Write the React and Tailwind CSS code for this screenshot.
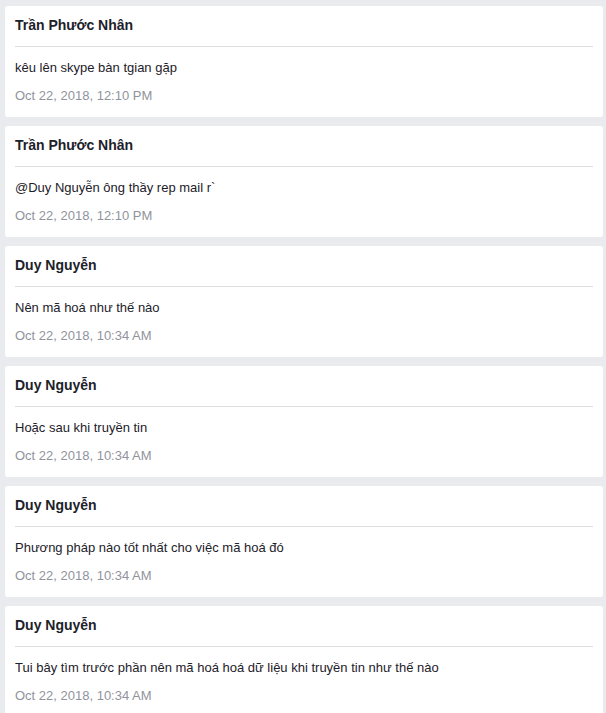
import React from 'react';

const comments = [
    { name: 'Trần Phước Nhân', text: 'kêu lên skype bàn tgian gặp', date: 'Oct 22, 2018, 12:10 PM' },
    { name: 'Trần Phước Nhân', text: '@Duy Nguyễn ông thầy rep mail r`', date: 'Oct 22, 2018, 12:10 PM' },
    { name: 'Duy Nguyễn', text: 'Nên mã hoá như thế nào', date: 'Oct 22, 2018, 10:34 AM' },
    { name: 'Duy Nguyễn', text: 'Hoặc sau khi truyền tin', date: 'Oct 22, 2018, 10:34 AM' },
    { name: 'Duy Nguyễn', text: 'Phương pháp nào tốt nhất cho việc mã hoá đó', date: 'Oct 22, 2018, 10:34 AM' },
    { name: 'Duy Nguyễn', text: 'Tui bây tìm trước phần nên mã hoá hoá dữ liệu khi truyền tin như thế nào', date: 'Oct 22, 2018, 10:34 AM' },
];

const App = () => {
    return (
        <div className="min-h-screen bg-[#e9ebee] pl-[5px] pr-[3px] pt-[6px] font-['Liberation_Sans',Arial,sans-serif]">
            <div className="flex flex-col gap-[9px]">
                {comments.map((c, i) => (
                    <div key={i} className="bg-white rounded-[3px] px-[10px]">
                        <div className="pt-[9px] pb-[11px] border-b border-[#dddfe2]">
                            <h3 className="text-[14px] leading-[20px] font-bold text-[#1d2129]">{c.name}</h3>
                        </div>
                        <div className="pt-[11px] pb-[11px]">
                            <p className="text-[13px] leading-[20px] text-[#1d2129]">{c.text}</p>
                            <p className="mt-[8px] text-[13px] leading-[20px] text-[#90949c]">{c.date}</p>
                        </div>
                    </div>
                ))}
            </div>
        </div>
    );
};

export default App;
